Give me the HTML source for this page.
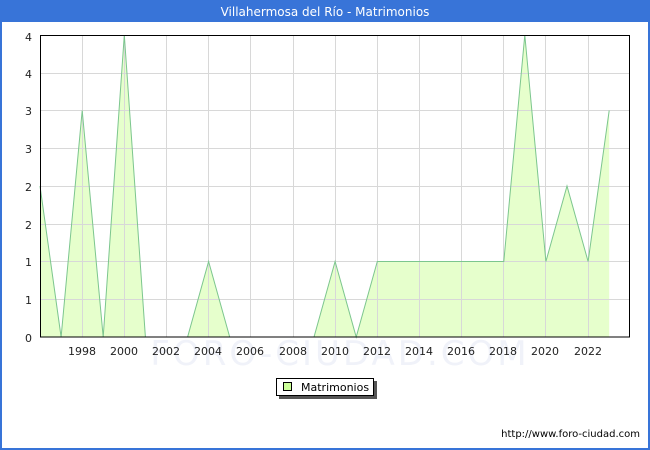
<!DOCTYPE html>
<html><head><meta charset="utf-8"><style>
html,body{margin:0;padding:0;background:#fff}
body{width:650px;height:450px;overflow:hidden;font-family:"DejaVu Sans","Liberation Sans",sans-serif}
</style></head><body>
<svg width="650" height="450" xmlns="http://www.w3.org/2000/svg" style="display:block;font-family:'DejaVu Sans','Liberation Sans',sans-serif">
<rect x="0" y="0" width="650" height="450" fill="#fff"/>
<rect x="1" y="1" width="648" height="448" fill="none" stroke="#3874d8" stroke-width="2"/>
<rect x="0" y="0" width="650" height="22" fill="#3874d8"/>
<text x="325" y="16" text-anchor="middle" font-size="12" fill="#fff">Villahermosa del Río - Matrimonios</text>
<text x="340" y="365" text-anchor="middle" font-size="34" fill="#f0f2f9" letter-spacing="3">FORO-CIUDAD.COM</text>
<polygon fill="#e6ffcc" stroke="none" points="40,337 40,186 61.1,337 82.2,110.5 103.2,337 124.3,35 145.4,337 166.5,337 187.6,337 208.6,261.5 229.7,337 250.8,337 271.9,337 293,337 314,337 335.1,261.5 356.2,337 377.3,261.5 398.4,261.5 419.4,261.5 440.5,261.5 461.6,261.5 482.7,261.5 503.8,261.5 524.8,35 545.9,261.5 567,186 588.1,261.5 609.2,110.5 609.2,337"/>
<g stroke="#d8d8d8" stroke-width="1">
<line x1="40" y1="73.5" x2="630" y2="73.5"/><line x1="40" y1="110.5" x2="630" y2="110.5"/>
<line x1="40" y1="148.5" x2="630" y2="148.5"/><line x1="40" y1="186.5" x2="630" y2="186.5"/>
<line x1="40" y1="224.5" x2="630" y2="224.5"/><line x1="40" y1="261.5" x2="630" y2="261.5"/>
<line x1="40" y1="299.5" x2="630" y2="299.5"/>
<line x1="82.5" y1="35" x2="82.5" y2="337"/><line x1="124.5" y1="35" x2="124.5" y2="337"/>
<line x1="166.5" y1="35" x2="166.5" y2="337"/><line x1="208.5" y1="35" x2="208.5" y2="337"/>
<line x1="250.5" y1="35" x2="250.5" y2="337"/><line x1="293.5" y1="35" x2="293.5" y2="337"/>
<line x1="335.5" y1="35" x2="335.5" y2="337"/><line x1="377.5" y1="35" x2="377.5" y2="337"/>
<line x1="419.5" y1="35" x2="419.5" y2="337"/><line x1="461.5" y1="35" x2="461.5" y2="337"/>
<line x1="503.5" y1="35" x2="503.5" y2="337"/><line x1="545.5" y1="35" x2="545.5" y2="337"/>
<line x1="588.5" y1="35" x2="588.5" y2="337"/>
</g>
<polyline fill="none" stroke="#7cc68e" stroke-width="1" points="40,186 61.1,337 82.2,110.5 103.2,337 124.3,35 145.4,337 166.5,337 187.6,337 208.6,261.5 229.7,337 250.8,337 271.9,337 293,337 314,337 335.1,261.5 356.2,337 377.3,261.5 398.4,261.5 419.4,261.5 440.5,261.5 461.6,261.5 482.7,261.5 503.8,261.5 524.8,35 545.9,261.5 567,186 588.1,261.5 609.2,110.5"/>
<rect x="40.5" y="35.5" width="589" height="301.5" fill="none" stroke="#000" stroke-width="1"/>
<g font-size="11" fill="#222" text-anchor="end">
<text x="32" y="41">4</text><text x="32" y="78">4</text><text x="32" y="115">3</text>
<text x="32" y="153">3</text><text x="32" y="191">2</text><text x="32" y="229">2</text>
<text x="32" y="266">1</text><text x="32" y="304">1</text><text x="32" y="342">0</text>
</g>
<g font-size="11" fill="#222" text-anchor="middle">
<text x="82" y="355">1998</text><text x="124" y="355">2000</text><text x="166" y="355">2002</text>
<text x="208" y="355">2004</text><text x="250" y="355">2006</text><text x="293" y="355">2008</text>
<text x="335" y="355">2010</text><text x="377" y="355">2012</text><text x="419" y="355">2014</text>
<text x="461" y="355">2016</text><text x="503" y="355">2018</text><text x="545" y="355">2020</text>
<text x="588" y="355">2022</text>
</g>
<rect x="279" y="381" width="98" height="18" fill="#555"/>
<rect x="276.5" y="378.5" width="97" height="17" fill="#fff" stroke="#000" stroke-width="1"/>
<rect x="283.5" y="382.5" width="8" height="8" fill="#ccff99" stroke="#000" stroke-width="1"/>
<text x="301" y="391" font-size="11" fill="#000">Matrimonios</text>
<text x="640" y="437" text-anchor="end" font-size="10" fill="#000">http://www.foro-ciudad.com</text>
</svg>
</body></html>
